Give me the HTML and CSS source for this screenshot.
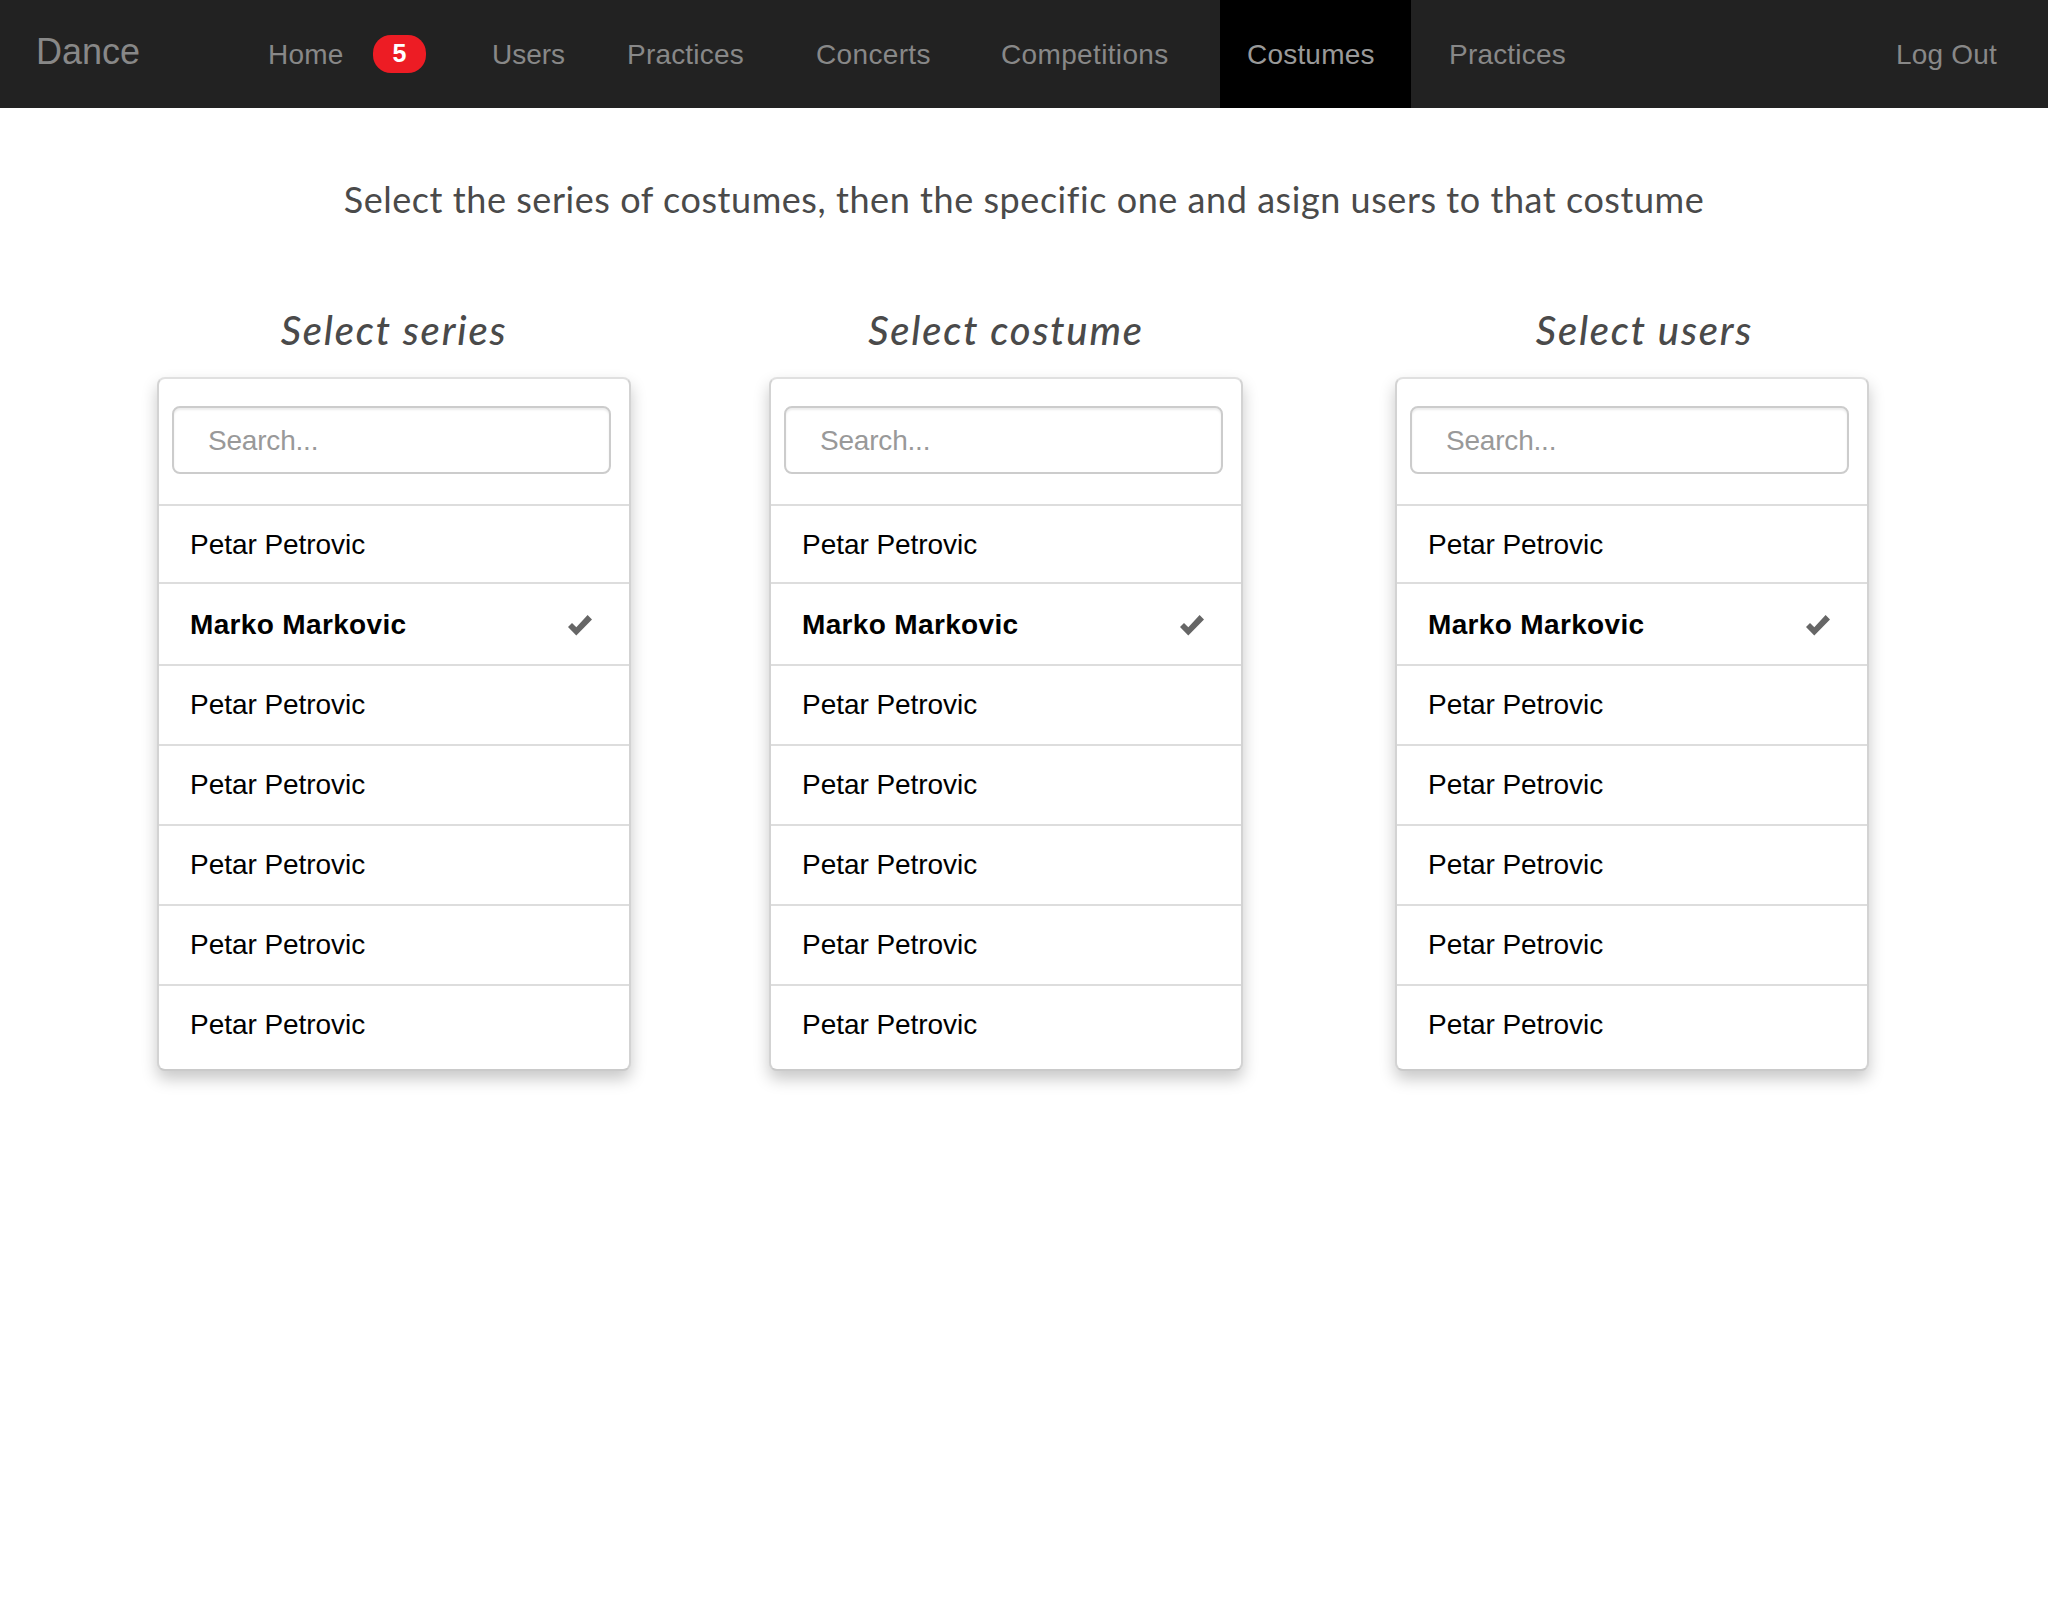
FILE: index.html
```html
<!DOCTYPE html>
<html lang="en">
<head>
<meta charset="utf-8">
<title>Dance</title>
<link rel="stylesheet" href="styles.css">
</head>
<body>
<svg class="sprite" aria-hidden="true"><symbol id="check" viewBox="0 0 24 21"><path d="M0 12L4 8L8.3 12.3L19.6 0L24 4.4L8.3 20.5Z"/></symbol></svg>
<nav class="navbar">
  <a class="brand">Dance</a>
  <a class="nav-home">Home</a>
  <span class="badge">5</span>
  <a class="nav-users">Users</a>
  <a>Practices</a>
  <a class="wide">Concerts</a>
  <a class="wide">Competitions</a>
  <a class="active">Costumes</a>
  <a class="after-active">Practices</a>
  <a>Log Out</a>
</nav>
<main>
  <p class="lead">Select the series of costumes, then the specific one and asign users to that costume</p>
  <div class="columns">
    <section class="series">
      <h2>Select series</h2>
      <div class="card">
        <div class="search"><input type="text" placeholder="Search..."></div>
        <ul>
          <li>Petar Petrovic</li>
          <li class="selected">Marko Markovic<svg class="check"><use href="#check"/></svg></li>
          <li>Petar Petrovic</li>
          <li>Petar Petrovic</li>
          <li>Petar Petrovic</li>
          <li>Petar Petrovic</li>
          <li>Petar Petrovic</li>
        </ul>
      </div>
    </section>
    <section class="costume">
      <h2>Select costume</h2>
      <div class="card">
        <div class="search"><input type="text" placeholder="Search..."></div>
        <ul>
          <li>Petar Petrovic</li>
          <li class="selected">Marko Markovic<svg class="check"><use href="#check"/></svg></li>
          <li>Petar Petrovic</li>
          <li>Petar Petrovic</li>
          <li>Petar Petrovic</li>
          <li>Petar Petrovic</li>
          <li>Petar Petrovic</li>
        </ul>
      </div>
    </section>
    <section class="users">
      <h2>Select users</h2>
      <div class="card">
        <div class="search"><input type="text" placeholder="Search..."></div>
        <ul>
          <li>Petar Petrovic</li>
          <li class="selected">Marko Markovic<svg class="check"><use href="#check"/></svg></li>
          <li>Petar Petrovic</li>
          <li>Petar Petrovic</li>
          <li>Petar Petrovic</li>
          <li>Petar Petrovic</li>
          <li>Petar Petrovic</li>
        </ul>
      </div>
    </section>
  </div>
</main>
</body>
</html>
```
FILE: styles.css
```css
* { box-sizing: border-box; }
body {
  margin: 0;
  min-height: 1600px;
  background: #fff;
  color: #000;
  font: 28px "Liberation Sans", Arial, sans-serif;
  letter-spacing: -0.05px;
}
.sprite { display: none; }
.navbar {
  display: grid;
  grid-template-columns: 232px 105px 119px 135px 189px 185px 219px 191px 485px auto;
  height: 108px;
  padding-left: 36px;
  background: #222;
  color: #888;
  letter-spacing: 0.2px;
  line-height: 106px;
}
.navbar a { height: 108px; padding-top: 2px; }
.navbar .brand { font-size: 36px; padding-top: 0; line-height: 103px; letter-spacing: 0; }
.navbar .nav-users { letter-spacing: 0; }
.navbar .wide { letter-spacing: 0.35px; }
.badge {
  align-self: center;
  width: 53px;
  height: 38px;
  border-radius: 18px;
  background: #ed1c24;
  color: #fff;
  font-size: 25px;
  font-weight: bold;
  line-height: 37px;
  text-align: center;
}
.navbar .active { background: #000; padding-left: 27px; color: #999; }
.navbar .after-active { padding-left: 38px; }
.lead {
  margin: 66px 0 0;
  color: #4a4a4a;
  font: 36px/50px Lato, sans-serif;
  letter-spacing: 0.55px;
  text-align: center;
}
.columns {
  display: flex;
  margin-top: 76px;
  padding-left: 157px;
}
.costume { margin-left: 138px; }
.users { margin-left: 152px; }
section { width: 474px; }
h2 {
  margin: 0 0 17px;
  color: #4a4a4a;
  font: italic 500 40px/60px Lato, sans-serif;
  letter-spacing: 1.8px;
  text-align: center;
}
.users h2 { padding-left: 25px; }
.card {
  height: 694px;
  border: 2px solid;
  border-color: #e0e0e0 #d3d3d3 #cacaca;
  border-radius: 8px;
  background: #fff;
  box-shadow: 0 8px 16px rgba(0, 0, 0, 0.22);
}
.search { padding: 27px 18px 30px 13px; }
input {
  display: block;
  width: 439px;
  height: 68px;
  padding: 1px 34px 0;
  border: 2px solid #ccc;
  border-radius: 8px;
  background: #fff;
  box-shadow: inset 0 2px 2px rgba(0, 0, 0, 0.075);
  font: inherit;
  letter-spacing: -0.2px;
}
input::placeholder { color: #999; opacity: 1; }
ul { margin: 0; padding: 0; list-style: none; }
li {
  display: flex;
  justify-content: space-between;
  border-top: 2px solid #ddd;
  padding: 0 37px 0 31px;
  line-height: 78px;
}
li:first-child { height: 78px; }
.selected { padding-top: 2px; font-weight: bold; letter-spacing: 0.35px; }
.check { width: 24px; height: 21px; margin-top: 29px; fill: #666; }
```
